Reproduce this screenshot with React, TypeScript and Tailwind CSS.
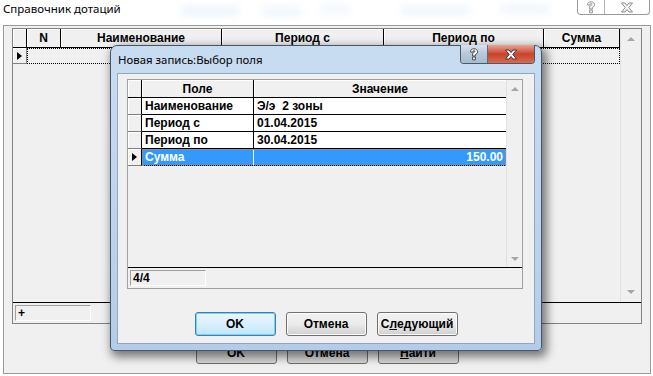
import React from "react";

const UI = "font-['Liberation_Sans',Arial,sans-serif]";
const CAPTION = "font-['Noto_Sans','Liberation_Sans',sans-serif]";

function Glyph({ kind, active }: { kind: "help" | "close"; active: boolean }) {
  const fill = active ? "#ffffff" : "#f4f4f4";
  const stroke = active ? "#3a3a3a" : "#8c8c8c";
  if (kind === "close") {
    return (
      <svg width="14" height="11" viewBox="0 0 14 11">
        <path
          d="M1.5 1 H5 L7 3.5 L9 1 H12.5 L8.8 5.5 L12.5 10 H9 L7 7.5 L5 10 H1.5 L5.2 5.5 Z"
          fill={fill}
          stroke={stroke}
          strokeWidth="1"
          strokeLinejoin="round"
        />
      </svg>
    );
  }
  return (
    <svg width="10" height="13" viewBox="0 0 10 13">
      <path
        d="M1.5 4 C1.5 1.5 3 0.8 5 0.8 C7.3 0.8 8.6 2 8.6 3.8 C8.6 5.4 7.4 6 6.4 6.6 L6.4 8 H3.6 L3.6 6 C3.6 5 4.6 4.6 5.3 4.2 C5.8 3.9 5.9 3.6 5.9 3.3 C5.9 2.8 5.5 2.6 5 2.6 C4.4 2.6 4.1 3 4.1 4 Z M3.6 9 H6.4 V11.8 H3.6 Z"
        fill={fill}
        stroke={stroke}
        strokeWidth="0.9"
        strokeLinejoin="round"
      />
    </svg>
  );
}

function CaptionButtons({ active }: { active: boolean }) {
  if (!active) {
    return (
      <div className="flex h-[15px] overflow-hidden rounded-b-[4px] border border-t-0 border-[#9a9a9a] bg-white">
        <div className="flex w-[27px] items-center justify-center border-r border-[#b5b5b5]">
          <Glyph kind="help" active={false} />
        </div>
        <div className="flex w-[44px] items-center justify-center">
          <Glyph kind="close" active={false} />
        </div>
      </div>
    );
  }
  return (
    <div className="flex h-[19px] overflow-hidden rounded-b-[4px] border border-t-0 border-[#4a5868]">
      <div className="flex w-[27px] items-center justify-center border-r border-[#5c6c7e] bg-linear-to-b from-[#d7e3ef] via-[#b7c8da] to-[#a9bccf]">
        <Glyph kind="help" active />
      </div>
      <div className="flex w-[46px] items-center justify-center bg-linear-to-b from-[#e8a394] via-[#c9422c] to-[#d86a52]">
        <Glyph kind="close" active />
      </div>
    </div>
  );
}

function Triangle({ dir, className = "" }: { dir: "up" | "down" | "right"; className?: string }) {
  if (dir === "right") {
    return (
      <svg width="5" height="8" viewBox="0 0 5 8" className={className}>
        <path d="M0 0 L5 4 L0 8 Z" fill="#000" />
      </svg>
    );
  }
  return (
    <svg width="8" height="4" viewBox="0 0 8 4" className={className}>
      <path d={dir === "up" ? "M0 4 L4 0 L8 4 Z" : "M0 0 L8 0 L4 4 Z"} fill="#a6a6a6" />
    </svg>
  );
}

function HeaderCell({ w, children }: { w: string; children?: React.ReactNode }) {
  return (
    <div
      className={`${w} flex h-full shrink-0 items-center justify-center border-r border-black bg-[#f0f0f0] text-[12px] font-bold shadow-[inset_1px_1px_0_#ffffff]`}
    >
      {children}
    </div>
  );
}

function OldButton({ label }: { label: React.ReactNode }) {
  return (
    <div className="flex h-[23px] w-[81px] items-center justify-center rounded-[3px] border border-[#707070] bg-linear-to-b from-[#f2f2f2] to-[#d5d5d5] text-[12px] font-bold">
      {label}
    </div>
  );
}

function BackgroundWindow() {
  return (
    <div className="flex h-full flex-col">
      <div className="flex h-[25px] items-start justify-between">
        <div className={`${CAPTION} pl-[3px] pt-[1px] text-[11.5px] leading-[16px] text-black`}>
          Справочник дотаций
        </div>
        <div className="mr-[3px]">
          <CaptionButtons active={false} />
        </div>
      </div>

      <div className="ml-[3px] flex h-[349px] w-[648px] flex-col border border-[#9a9a9a] bg-[#f0f0f0] pl-[8px] pt-[2px]">
        {/* grid */}
        <div className="flex h-[296px] w-[630px] flex-col border border-[#828282] bg-[#f0f0f0]">
          <div className="flex h-[273px]">
            <div className="flex w-[607px] flex-col">
              <div className="flex h-[19px] border-b border-black">
                <HeaderCell w="w-[14px]" />
                <HeaderCell w="w-[34px]">N</HeaderCell>
                <HeaderCell w="w-[161px]">Наименование</HeaderCell>
                <HeaderCell w="w-[162px]">Период с</HeaderCell>
                <HeaderCell w="w-[160px]">Период по</HeaderCell>
                <HeaderCell w="w-[76px]">Сумма</HeaderCell>
              </div>
              <div className="flex h-[16px]">
                <div className="flex w-[14px] items-center justify-center border-r border-b border-[#808080] bg-[#f0f0f0] shadow-[inset_1px_1px_0_#ffffff]">
                  <Triangle dir="right" />
                </div>
                <div className="w-[593px] border border-dotted border-black" />
              </div>
            </div>
            <div className="flex w-[21px] flex-col items-center justify-between border-l border-[#e2e2e2] bg-[#f0f0f0] py-[8px]">
              <Triangle dir="up" />
              <Triangle dir="down" />
            </div>
          </div>
          <div className="flex h-[21px] items-start border-t border-black pl-[2px] pt-[2px]">
            <div className="h-[16px] w-[76px] border border-t-[#a0a0a0] border-l-[#a0a0a0] border-b-white border-r-white pl-[2px] text-[12px] font-bold leading-[14px]">
              +
            </div>
          </div>
        </div>

        {/* buttons */}
        <div className="mt-[17px] flex justify-center gap-[10px] pr-[8px]">
          <OldButton label="OK" />
          <OldButton label="Отмена" />
          <OldButton label={<><span className="underline">Н</span>айти</>} />
        </div>
      </div>
    </div>
  );
}

function DialogButton({ label, focused }: { label: React.ReactNode; focused?: boolean }) {
  return (
    <div
      className={`flex h-[24px] w-[81px] items-center justify-center rounded-[3px] border text-[12px] font-bold ${
        focused
          ? "border-[#3c7fb1] bg-linear-to-b from-[#eaf6fd] via-[#d9f0fc] to-[#bee6fd] shadow-[inset_0_0_0_1px_#7fd0f5]"
          : "border-[#707070] bg-linear-to-b from-[#f2f2f2] via-[#ebebeb] to-[#cfcfcf] shadow-[inset_0_0_0_1px_#fcfcfc]"
      }`}
    >
      {label}
    </div>
  );
}

function DataRow({
  name,
  value,
  selected,
  alignRight,
}: {
  name: string;
  value: string;
  selected?: boolean;
  alignRight?: boolean;
}) {
  return (
    <div className="flex h-[17px]">
      <div className="flex w-[14px] shrink-0 items-center justify-center border-r border-b border-r-black border-b-[#808080] bg-[#f0f0f0] shadow-[inset_1px_1px_0_#ffffff]">
        {selected && <Triangle dir="right" />}
      </div>
      <div
        className={`flex w-[364px] border-b border-black text-[12px] font-bold ${
          selected
            ? "bg-[#3399ff] text-white outline-1 outline-dotted outline-offset-[-1px] outline-[#d08a3a]"
            : "bg-white text-black"
        }`}
      >
        <div className={`flex w-[112px] items-center border-r ${selected ? "border-white" : "border-black"} pl-[3px]`}>
          {name}
        </div>
        <div className={`flex flex-1 items-center whitespace-pre px-[3px] ${alignRight ? "justify-end" : ""}`}>
          {value}
        </div>
      </div>
    </div>
  );
}

function Dialog() {
  return (
    <div className="absolute left-[110px] top-[45px] flex h-[306px] w-[432px] flex-col rounded-t-[7px] rounded-b-[4px] border border-[#44566b] bg-linear-to-b from-[#c8dcf1] via-[#bfd5ed] to-[#b4cce7] shadow-[3px_4px_10px_2px_rgba(0,0,0,0.5)]">
      <div className="relative flex h-[27px] items-center pl-[7px]">
        <span className={`${CAPTION} text-[11.4px] text-black`}>Новая запись:Выбор поля</span>
        <div className="absolute right-[6px] top-[-1px]">
          <CaptionButtons active />
        </div>
      </div>
      <div className="mx-[6px] flex h-[271px] flex-col border border-[#8ea9c7] bg-[#f0f0f0] pl-[9px] pt-[5px]">
        {/* grid */}
        <div className="flex h-[210px] w-[396px] flex-col border border-[#a0a0a0] bg-[#f0f0f0]">
          <div className="flex h-[187px]">
            <div className="flex w-[378px] flex-col">
              <div className="flex h-[18px] border-b border-black">
                <HeaderCell w="w-[14px]" />
                <HeaderCell w="w-[112px]">Поле</HeaderCell>
                <div className="flex h-full w-[252px] items-center justify-center bg-[#f0f0f0] text-[12px] font-bold shadow-[inset_1px_1px_0_#ffffff]">
                  Значение
                </div>
              </div>
              <DataRow name="Наименование" value="Э/э  2 зоны" />
              <DataRow name="Период с" value="01.04.2015" />
              <DataRow name="Период по" value="30.04.2015" />
              <DataRow name="Сумма" value="150.00" selected alignRight />
            </div>
            <div className="flex w-[16px] flex-col items-center justify-between border-l border-[#e2e2e2] bg-[#f0f0f0] pb-[6px] pt-[7px]">
              <Triangle dir="up" />
              <Triangle dir="down" />
            </div>
          </div>
          <div className="flex h-[21px] items-start border-t border-black pl-[2px] pt-[2px]">
            <div className="h-[16px] w-[76px] border border-t-[#a0a0a0] border-l-[#a0a0a0] border-b-white border-r-white pl-[2px] text-[12px] font-bold leading-[14px]">
              4/4
            </div>
          </div>
        </div>

        <div className="mt-[23px] flex justify-center gap-[10px] pr-[9px]">
          <DialogButton label="OK" focused />
          <DialogButton label="Отмена" />
          <DialogButton
            label={
              <>
                С<span className="underline">л</span>едующий
              </>
            }
          />
        </div>
      </div>
    </div>
  );
}

export default function App() {
  return (
    <div className={`${UI} relative h-[376px] w-[653px] overflow-hidden bg-white text-black`}>
      {/* faded glass behind the inactive caption */}
      <div className="absolute left-[180px] top-[7px] h-[8px] w-[60px] rounded-full bg-[#b9d6f3] opacity-30 blur-[4px]" />
      <div className="absolute left-[262px] top-[8px] h-[7px] w-[40px] rounded-full bg-[#b9d6f3] opacity-30 blur-[4px]" />
      <div className="absolute left-[320px] top-[6px] h-[7px] w-[30px] rounded-full bg-[#c4ddf5] opacity-30 blur-[4px]" />
      <div className="absolute left-[400px] top-[7px] h-[7px] w-[70px] rounded-full bg-[#b9d6f3] opacity-30 blur-[4px]" />
      <div className="absolute left-[500px] top-[5px] h-[8px] w-[50px] rounded-full bg-[#c4ddf5] opacity-30 blur-[4px]" />
      <BackgroundWindow />
      <Dialog />
    </div>
  );
}
